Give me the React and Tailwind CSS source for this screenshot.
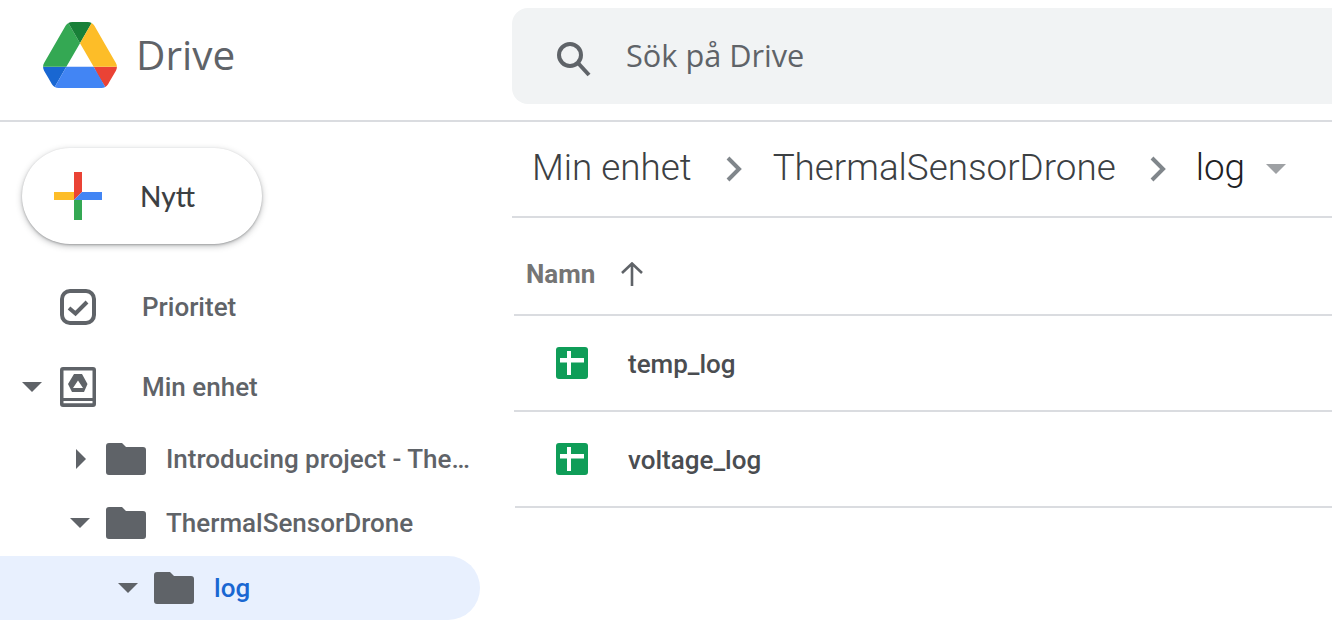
import React from 'react'

const roboto = "font-['Roboto',sans-serif]"

const DriveLogo = () => (
  <svg viewBox="0 0 87.3 78" className="w-[74px] h-[66px]">
    <path d="m6.6 66.85 3.85 6.65c.8 1.4 1.95 2.5 3.3 3.3l13.75-23.8h-27.5c0 1.55.4 3.1 1.2 4.5z" fill="#1967d2" />
    <path d="m43.65 25-13.75-23.8c-1.35.8-2.5 1.9-3.3 3.3l-25.4 44a9.06 9.06 0 0 0 -1.2 4.5h27.5z" fill="#34a853" />
    <path d="m73.55 76.8c1.35-.8 2.5-1.9 3.3-3.3l1.6-2.75 7.65-13.25c.8-1.4 1.2-2.95 1.2-4.5h-27.5l5.85 11.5z" fill="#ea4335" />
    <path d="m43.65 25 13.75-23.8c-1.35-.8-2.9-1.2-4.5-1.2h-18.5c-1.6 0-3.15.45-4.5 1.2z" fill="#188038" />
    <path d="m59.8 53h-32.3l-13.75 23.8c1.35.8 2.9 1.2 4.5 1.2h50.8c1.6 0 3.15-.45 4.5-1.2z" fill="#4285f4" />
    <path d="m73.4 26.5-12.7-22c-.8-1.4-1.95-2.5-3.3-3.3l-13.75 23.8 16.15 28h27.45c0-1.55-.4-3.1-1.2-4.5z" fill="#fdbd28" />
  </svg>
)

const PlusIcon = () => (
  <svg viewBox="0 0 48 48" className="w-12 h-12">
    <path d="M20 0h8v20l-8 8z" fill="#ea4335" />
    <path d="M0 20h20v8H0z" fill="#fdbd28" />
    <path d="M28 20h20v8H20z" fill="#4285f4" />
    <path d="M20 28h8v20h-8z" fill="#34a853" />
  </svg>
)

const SearchIcon = () => (
  <svg viewBox="0 0 36 36" className="w-9 h-9 mt-2" fill="none" stroke="#5f6368" strokeWidth="4">
    <circle cx="14" cy="13" r="11" />
    <path d="M22 21 33 33" />
  </svg>
)

const PriorityIcon = () => (
  <svg viewBox="0 0 36 36" className="w-9 h-9" fill="none" stroke="#5f6368">
    <rect x="2" y="2" width="32" height="32" rx="8" strokeWidth="4" />
    <path d="M9 19 15.500 24.500 27 13" strokeWidth="4" />
  </svg>
)

const MyDriveIcon = () => (
  <svg viewBox="0 0 36 40" className="w-9 h-10">
    <path fillRule="evenodd" fill="#5f6368" d="M3 0h30a3 3 0 0 1 3 3v34a3 3 0 0 1-3 3H3a3 3 0 0 1-3-3V3a3 3 0 0 1 3-3zM3.500 3.500v27.500h29V3.500zM3.500 34v2.200h29V34z" />
    <path fillRule="evenodd" fill="#5f6368" d="M14 7h8l5.500 10-3.500 8H12L8 17zM18 13.500l-5 7.500h10z" />
  </svg>
)

const FolderIcon = () => (
  <svg viewBox="0 0 40 32" className="w-10 h-8">
    <path d="M3 0h13l4 4h17a3 3 0 0 1 3 3v22a3 3 0 0 1-3 3H3a3 3 0 0 1-3-3V3a3 3 0 0 1 3-3z" fill="#5f6368" />
  </svg>
)

const SheetIcon = () => (
  <svg viewBox="0 0 32 32" className="w-8 h-8">
    <rect width="32" height="32" rx="3" fill="#0f9d58" />
    <path d="M11 4h4v7h13v4.500H15V28h-4V15.500H4V11h7z" fill="#fff" />
  </svg>
)

const CaretDown = ({ className = '' }) => (
  <svg viewBox="0 0 20 10" className={`w-5 h-2.5 ${className}`}>
    <path d="M0 0h20L10 10z" fill="#5f6368" />
  </svg>
)

const CaretRight = () => (
  <svg viewBox="0 0 10 20" className="w-2.5 h-5 translate-x-px">
    <path d="M0 0l10 10L0 20z" fill="#5f6368" />
  </svg>
)

const Chevron = () => (
  <svg viewBox="0 0 16 26" className="w-4 h-[26px]" fill="none" stroke="#80868b" strokeWidth="4">
    <path d="M2 2 13 13 2 24" />
  </svg>
)

const TreeRow = ({ caret, pad, label, active }) => (
  <div className={`flex items-center h-16 w-[480px] rounded-r-full ${active ? 'bg-[#e8f0fe] mt-px' : ''}`} style={{ paddingLeft: pad }}>
    <div className="w-5 flex justify-center">{caret}</div>
    <div className="ml-[16px]"><FolderIcon /></div>
    <span className={`ml-5 text-[26px] font-medium whitespace-nowrap ${active ? 'text-[#1967d2]' : 'text-[#5f6368]'}`}>{label}</span>
  </div>
)

const FileRow = ({ name, left, iconLeft }) => (
  <div className={`flex items-center h-[96px] border-b-2 border-[#dadce0] ${left}`}>
    <div className={iconLeft}><SheetIcon /></div>
    <span className="ml-10 pt-[2px] text-[26px] font-medium text-[#4a4d51]">{name}</span>
  </div>
)

export default function App() {
  return (
    <div className={`w-[1332px] h-[642px] overflow-hidden bg-white ${roboto}`}>
      <header className="flex h-[122px] border-b-2 border-[#dadce0]">
        <div className="w-[512px] flex items-center pl-[43px] pb-[10px]">
          <DriveLogo />
          <span className="ml-[19px] text-[40.5px] leading-none text-[#5f6368] font-['Open_Sans',sans-serif]">Drive</span>
        </div>
        <div className="flex-1 mt-2 h-24 bg-[#f1f3f4] rounded-l-2xl flex items-center pl-[44px]">
          <SearchIcon />
          <span className="ml-[34px] mb-[2px] text-[30.7px] text-[#5f6368] font-['Open_Sans',sans-serif]">Sök på Drive</span>
        </div>
      </header>

      <div className="flex">
        <aside className="w-[512px] shrink-0">
          <div className="pl-[22px] pt-[26px]">
            <button className="flex items-center w-[240px] h-24 pl-8 rounded-full bg-white shadow-[0_2px_6px_rgba(60,64,67,0.35),0_1px_2px_rgba(60,64,67,0.3)]">
              <PlusIcon />
              <span className="ml-[38px] text-[28px] font-medium text-[#3c4043] font-['Lato',sans-serif]">Nytt</span>
            </button>
          </div>
          <div className="flex items-center h-16 mt-[31px] pl-[60px]">
            <PriorityIcon />
            <span className="ml-[46px] text-[26px] font-medium text-[#5f6368]">Prioritet</span>
          </div>
          <div className="flex items-center h-16 mt-4 pl-[22px]">
            <CaretDown />
            <div className="ml-[18px]"><MyDriveIcon /></div>
            <span className="ml-[46px] text-[26px] font-medium text-[#5f6368]">Min enhet</span>
          </div>
          <div className="mt-2">
            <TreeRow pad={70} caret={<CaretRight />} label="Introducing project - The…" />
            <TreeRow pad={70} caret={<CaretDown />} label="ThermalSensorDrone" />
            <TreeRow pad={118} caret={<CaretDown />} label="log" active />
          </div>
        </aside>

        <main className="flex-1 min-w-0">
          <div className="flex items-center h-[96px] border-b-2 border-[#dadce0] pl-[20px] text-[36.8px] font-light">
            <span className="pb-[2px] text-[#3c4043]">Min enhet</span>
            <div className="ml-[34px]"><Chevron /></div>
            <span className="ml-[31px] pb-[2px] text-[#3c4043]">ThermalSensorDrone</span>
            <div className="ml-[34px]"><Chevron /></div>
            <span className="ml-[30px] pb-[2px] text-[#202124]">log</span>
            <CaretDown className="ml-[21px] opacity-60" />
          </div>
          <div className="flex items-center h-[98px] border-b-2 border-[#dadce0] ml-[2px] pl-[12px] pt-[16px]">
            <span className="text-[26px] font-bold text-[#757575]">Namn</span>
            <svg viewBox="0 0 24 24" className="ml-[25px] w-6 h-6" fill="none" stroke="#5f6368" strokeWidth="2.6">
              <path d="M12 24V2M2 11 12 1.500 22 11" />
            </svg>
          </div>
          <FileRow name="temp_log" left="ml-[2px]" iconLeft="ml-[42px]" />
          <FileRow name="voltage_log" left="ml-[3px]" iconLeft="ml-[41px]" />
        </main>
      </div>
    </div>
  )
}
